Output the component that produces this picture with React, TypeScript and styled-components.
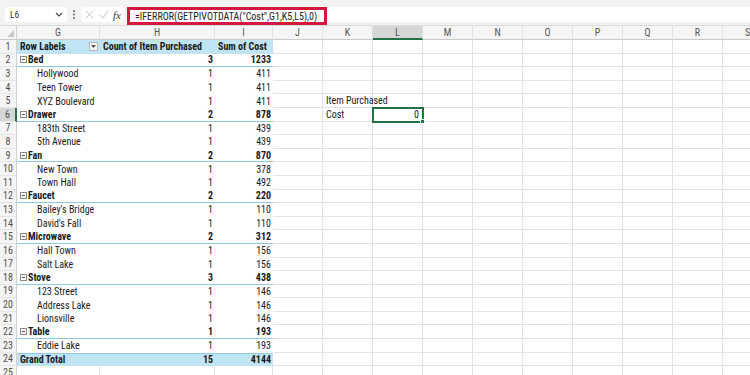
import styled, { createGlobalStyle } from 'styled-components';

const GlobalStyle = createGlobalStyle`
  html, body {
    margin: 0;
    padding: 0;
    background: #ffffff;
  }
  body {
    width: 750px;
    height: 375px;
    overflow: hidden;
    font-family: "Roboto Condensed", "DejaVu Sans Condensed", "Liberation Sans Narrow", Roboto, sans-serif;
    font-stretch: condensed;
    color: #1a1a1a;
  }
`;

const COLS = ['G', 'H', 'I', 'J', 'K', 'L', 'M', 'N', 'O', 'P', 'Q', 'R', 'S'];
const TEMPLATE = '17px 83px 115px 58px repeat(10, 50px)';
const GREEN = '#217346';
const PIVOT_BLUE = '#c0e4f4';
const PIVOT_LINE = '#8ecae6';

const Page = styled.div`
	width: 750px;
	height: 375px;
	overflow: hidden;
`;

const FormulaBar = styled.div`
	display: flex;
	align-items: flex-start;
	height: 26px;
	box-sizing: border-box;
	padding: 7px 0 0 5px;
	background: #f3f3f3;
	border-bottom: 1px solid #dadada;
`;

const NameBox = styled.div`
	width: 62px;
	height: 15px;
	box-sizing: border-box;
	display: flex;
	align-items: center;
	justify-content: space-between;
	padding: 0 4px 0 5px;
	background: #fff;
	border-radius: 3px;
	font-size: 9.5px;
	color: #333;
`;

const Dots = styled.div`
	width: 14px;
	height: 15px;
	display: flex;
	align-items: center;
	justify-content: center;
`;

const FnBox = styled.div`
	width: 43px;
	height: 15px;
	box-sizing: border-box;
	display: flex;
	align-items: center;
	justify-content: space-between;
	padding: 0 3px 0 4px;
	background: #fff;
	border-radius: 3px;
`;

const Fx = styled.span`
	font-family: "Liberation Serif", serif;
	font-style: italic;
	font-size: 11px;
	color: #333;
`;

const FormulaInput = styled.div`
	flex: 1;
	height: 15px;
	margin-left: 3px;
	display: flex;
	align-items: center;
	background: #fff;
`;

const Highlight = styled.div`
	width: 200px;
	height: 18px;
	margin-top: 3px;
	box-sizing: border-box;
	border: 3px solid #d3173f;
	display: flex;
	align-items: center;
	padding-left: 5px;
	font-size: 10px;
	color: #222;
	white-space: nowrap;
`;

const Row = styled.div<{ $head?: boolean }>`
	display: grid;
	grid-template-columns: ${TEMPLATE};
	height: ${(p) => (p.$head ? '14px' : '13.6px')};
`;

const ColHead = styled.div<{ $active?: boolean }>`
	box-sizing: border-box;
	display: flex;
	align-items: center;
	justify-content: center;
	font-size: 10px;
	color: #555;
	background: ${(p) => (p.$active ? '#d6d6d6' : '#f5f5f5')};
	border-right: 1px solid #e0e0e0;
	border-bottom: ${(p) => (p.$active ? `2px solid ${GREEN}` : '1px solid #c9c9c9')};
`;

const Corner = styled.div`
	box-sizing: border-box;
	background: #f5f5f5;
	border-right: 1px solid #d0d0d0;
	border-bottom: 1px solid #c9c9c9;
	display: flex;
	align-items: flex-end;
	justify-content: flex-end;
	padding: 0 2px 2px 0;
`;

const RowNum = styled.div<{ $active?: boolean }>`
	box-sizing: border-box;
	display: flex;
	align-items: center;
	justify-content: center;
	font-size: 10px;
	color: #505050;
	background: ${(p) => (p.$active ? '#d6d6d6' : '#f5f5f5')};
	border-right: ${(p) => (p.$active ? `2px solid ${GREEN}` : '1px solid #d0d0d0')};
	border-bottom: 1px solid #e6e6e6;
`;

type Kind = 'header' | 'group' | 'item' | 'total';

const PivotCell = styled.div<{ $kind: Kind; $num?: boolean; $indent?: boolean }>`
	box-sizing: border-box;
	display: flex;
	align-items: center;
	justify-content: ${(p) => (p.$num ? 'flex-end' : 'flex-start')};
	gap: 1px;
	padding: ${(p) => (p.$indent ? '0 2px 0 20px' : '0 2px 0 3px')};
	font-size: 10px;
	font-weight: ${(p) => (p.$kind === 'item' ? 'normal' : 'bold')};
	white-space: nowrap;
	background: ${(p) => (p.$kind === 'header' || p.$kind === 'total' ? PIVOT_BLUE : '#fff')};
	border-bottom: ${(p) => (p.$kind === 'group' ? `1px solid ${PIVOT_LINE}` : 'none')};
	border-top: ${(p) => (p.$kind === 'total' ? `1px solid ${PIVOT_LINE}` : 'none')};
`;

const Cell = styled.div<{ $selected?: boolean }>`
	position: relative;
	box-sizing: border-box;
	display: flex;
	align-items: center;
	justify-content: flex-end;
	padding: 0 3px;
	font-size: 10px;
	white-space: nowrap;
	border-right: 1px solid #e2e2e2;
	border-bottom: 1px solid #e2e2e2;
	outline: ${(p) => (p.$selected ? `2px solid ${GREEN}` : 'none')};
	outline-offset: -1px;
	z-index: ${(p) => (p.$selected ? 1 : 0)};
`;

const TextCell = styled(Cell)`
	justify-content: flex-start;
	overflow: visible;
`;

const FillHandle = styled.span`
	position: absolute;
	right: -3px;
	bottom: -3px;
	width: 5px;
	height: 5px;
	background: ${GREEN};
	border: 1px solid #fff;
	box-sizing: border-box;
`;

const FilterButton = styled.span`
	margin-left: auto;
	width: 9px;
	height: 9px;
	box-sizing: border-box;
	background: #f4f4f4;
	border: 1px solid #b8b8b8;
	display: flex;
	align-items: center;
	justify-content: center;
`;

const Collapse = styled.span`
	width: 7px;
	height: 7px;
	box-sizing: border-box;
	border: 1px solid #8a8a8a;
	display: flex;
	align-items: center;
	justify-content: center;
	&::after {
		content: '';
		width: 3px;
		height: 1px;
		background: #555;
	}
`;

type PivotRow = { kind: Kind; label: string; count: string; cost: string };

const pivot: PivotRow[] = [
	{ kind: 'header', label: 'Row Labels', count: 'Count of Item Purchased', cost: 'Sum of Cost' },
	{ kind: 'group', label: 'Bed', count: '3', cost: '1233' },
	{ kind: 'item', label: 'Hollywood', count: '1', cost: '411' },
	{ kind: 'item', label: 'Teen Tower', count: '1', cost: '411' },
	{ kind: 'item', label: 'XYZ Boulevard', count: '1', cost: '411' },
	{ kind: 'group', label: 'Drawer', count: '2', cost: '878' },
	{ kind: 'item', label: '183th Street', count: '1', cost: '439' },
	{ kind: 'item', label: '5th Avenue', count: '1', cost: '439' },
	{ kind: 'group', label: 'Fan', count: '2', cost: '870' },
	{ kind: 'item', label: 'New Town', count: '1', cost: '378' },
	{ kind: 'item', label: 'Town Hall', count: '1', cost: '492' },
	{ kind: 'group', label: 'Faucet', count: '2', cost: '220' },
	{ kind: 'item', label: "Bailey's Bridge", count: '1', cost: '110' },
	{ kind: 'item', label: "David's Fall", count: '1', cost: '110' },
	{ kind: 'group', label: 'Microwave', count: '2', cost: '312' },
	{ kind: 'item', label: 'Hall Town', count: '1', cost: '156' },
	{ kind: 'item', label: 'Salt Lake', count: '1', cost: '156' },
	{ kind: 'group', label: 'Stove', count: '3', cost: '438' },
	{ kind: 'item', label: '123 Street', count: '1', cost: '146' },
	{ kind: 'item', label: 'Address Lake', count: '1', cost: '146' },
	{ kind: 'item', label: 'Lionsville', count: '1', cost: '146' },
	{ kind: 'group', label: 'Table', count: '1', cost: '193' },
	{ kind: 'item', label: 'Eddie Lake', count: '1', cost: '193' },
	{ kind: 'total', label: 'Grand Total', count: '15', cost: '4144' },
];

// values outside the pivot, keyed by "col+row"
const extra: Record<string, string> = {
	K5: 'Item Purchased',
	K6: 'Cost',
	L6: '0',
};

const SELECTED = 'L6';

const App = () => {
	const rows = Array.from({ length: 25 }, (_, i) => i + 1);

	return (
		<Page>
			<GlobalStyle />
			<FormulaBar>
				<NameBox>
					<span>L6</span>
					<svg width="8" height="5" viewBox="0 0 8 5">
						<path d="M1 1l3 3 3-3" stroke="#444" strokeWidth="1.1" fill="none" />
					</svg>
				</NameBox>
				<Dots>
					<svg width="2" height="9" viewBox="0 0 2 9">
						<circle cx="1" cy="1" r="0.9" fill="#555" />
						<circle cx="1" cy="4.5" r="0.9" fill="#555" />
						<circle cx="1" cy="8" r="0.9" fill="#555" />
					</svg>
				</Dots>
				<FnBox>
					<svg width="9" height="9" viewBox="0 0 9 9">
						<path d="M1 1l7 7M8 1l-7 7" stroke="#c4c4c4" strokeWidth="1" />
					</svg>
					<svg width="10" height="9" viewBox="0 0 10 9">
						<path d="M1 5l3 3 5-7" stroke="#c4c4c4" strokeWidth="1" fill="none" />
					</svg>
					<Fx>fx</Fx>
				</FnBox>
				<FormulaInput>
					<Highlight>=IFERROR(GETPIVOTDATA("Cost",G1,K5,L5),0)</Highlight>
				</FormulaInput>
			</FormulaBar>

			<Row $head>
				<Corner>
					<svg width="7" height="7" viewBox="0 0 7 7">
						<path d="M7 0v7H0z" fill="#c6c6c6" />
					</svg>
				</Corner>
				{COLS.map((c) => (
					<ColHead key={c} $active={c === 'L'}>
						{c}
					</ColHead>
				))}
			</Row>

			{rows.map((r) => {
				const p = pivot[r - 1];
				return (
					<Row key={r}>
						<RowNum $active={r === 6}>{r}</RowNum>
						{p ? (
							<>
								<PivotCell $kind={p.kind} $indent={p.kind === 'item'}>
									{p.kind === 'group' && <Collapse />}
									{p.label}
									{p.kind === 'header' && (
										<FilterButton>
											<svg width="5" height="3" viewBox="0 0 5 3">
												<path d="M0 0h5L2.5 3z" fill="#555" />
											</svg>
										</FilterButton>
									)}
								</PivotCell>
								<PivotCell $kind={p.kind} $num={p.kind !== 'header'}>
									{p.count}
								</PivotCell>
								<PivotCell $kind={p.kind} $num={p.kind !== 'header'}>
									{p.cost}
								</PivotCell>
							</>
						) : (
							COLS.slice(0, 3).map((c) => <Cell key={c} />)
						)}
						{COLS.slice(3).map((c) => {
							const id = `${c}${r}`;
							const v = extra[id];
							if (v && isNaN(Number(v))) {
								return <TextCell key={id}>{v}</TextCell>;
							}
							return (
								<Cell key={id} $selected={id === SELECTED}>
									{v}
									{id === SELECTED && <FillHandle />}
								</Cell>
							);
						})}
					</Row>
				);
			})}
		</Page>
	);
};

export default App;
